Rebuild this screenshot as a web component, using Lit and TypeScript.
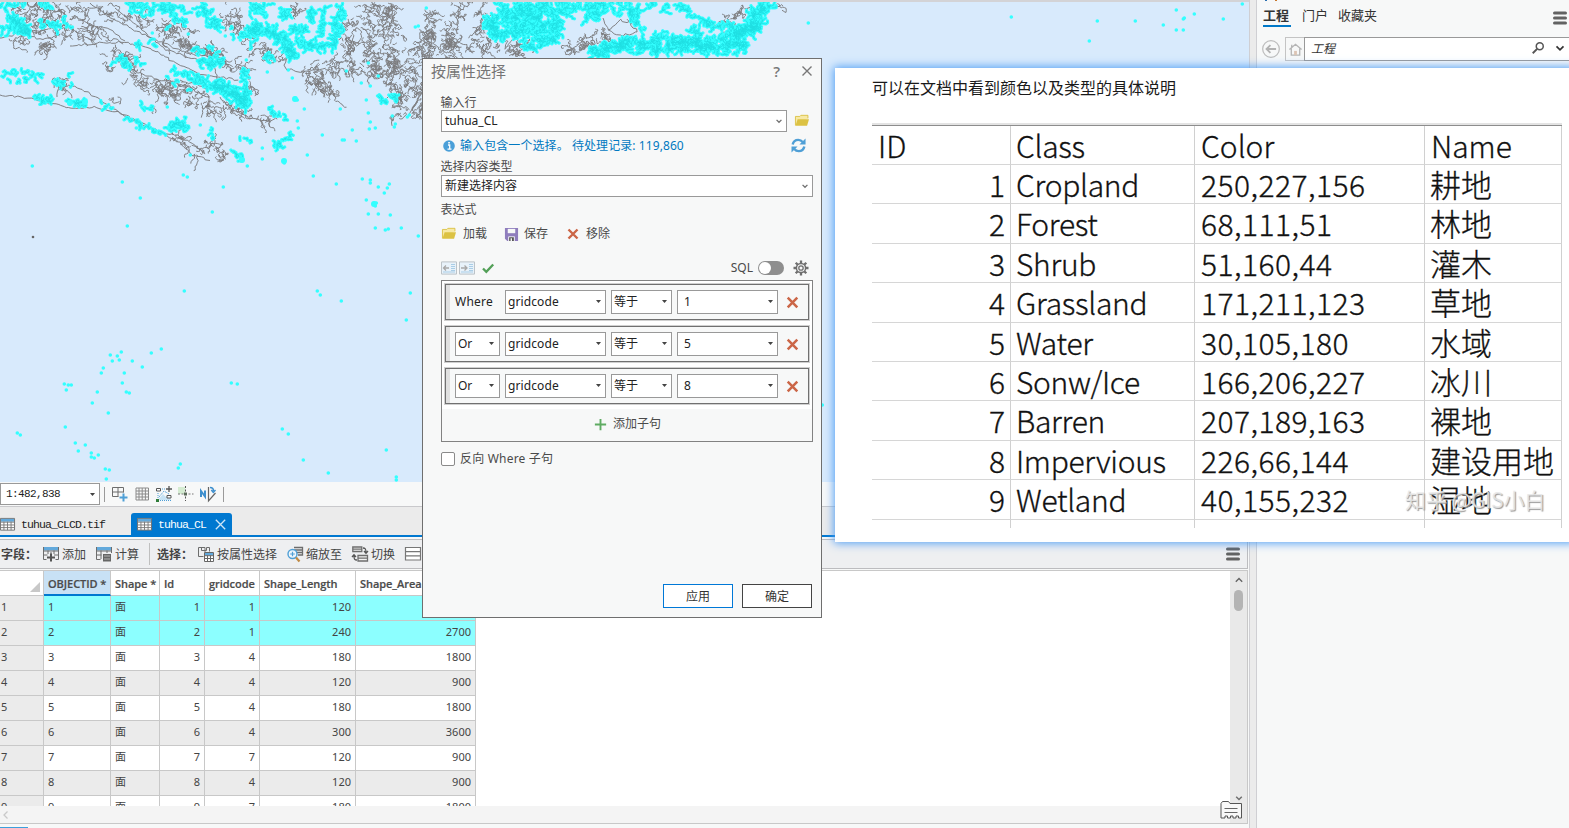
import { LitElement, html, css, svg } from "lit";
import { customElement } from "lit/decorators.js";
import { classMap } from "lit/directives/class-map.js";

type Band = [number, number, number, number, number, number];

function rng(seed: number) {
  let s = seed;
  return () => {
    s = (s * 1664525 + 1013904223) >>> 0;
    return s / 4294967296;
  };
}

// Wandering strokes that follow a band: x1, y1, x2, y2, half width, stroke count.
function scribble(bands: Band[], seed: number, steps: number, size: number, drift: number, share: number): string {
  const r = rng(seed);
  let d = "";
  for (const [x1, y1, x2, y2, w, n] of bands) {
    const len = Math.hypot(x2 - x1, y2 - y1) || 1;
    const ux = (x2 - x1) / len;
    const uy = (y2 - y1) / len;
    for (let i = 0; i < n * share; i++) {
      const t = r() * len;
      const o = (r() + r() - 1) * w;
      let x = x1 + ux * t - uy * o;
      let y = y1 + uy * t + ux * o;
      d += `M${x.toFixed(1)} ${y.toFixed(1)}`;
      let a = r() * 6.28;
      const k = 2 + Math.floor(r() * steps);
      for (let j = 0; j < k; j++) {
        a += (r() - 0.5) * 3.6;
        x += Math.cos(a) * size + ux * drift;
        y += Math.sin(a) * size + uy * drift;
        d += `L${x.toFixed(1)} ${y.toFixed(1)}`;
      }
    }
  }
  return d;
}

// A single jittered line through the given points.
function trace(lines: number[][], seed: number): string {
  const r = rng(seed);
  let d = "";
  for (const p of lines) {
    d += `M${p[0]} ${p[1]}`;
    for (let i = 2; i < p.length; i += 2) {
      const dx = p[i] - p[i - 2];
      const dy = p[i + 1] - p[i - 1];
      const n = Math.max(1, Math.round(Math.hypot(dx, dy) / 3));
      for (let j = 1; j <= n; j++) {
        d += `L${(p[i - 2] + (dx * j) / n + (r() - 0.5) * 2.2).toFixed(1)} ${(p[i - 1] + (dy * j) / n + (r() - 0.5) * 2.2).toFixed(1)}`;
      }
    }
  }
  return d;
}

const GRAY: Band[] = [
  [10, 8, 85, 12, 13, 60], [15, 25, 110, 35, 10, 65], [40, 42, 50, 52, 7, 16], [12, 43, 30, 44, 4, 10],
  [95, 5, 220, 60, 6, 50], [130, 10, 222, 55, 9, 60], [110, 52, 135, 66, 9, 26], [128, 75, 178, 97, 8, 55],
  [165, 78, 205, 98, 7, 22], [185, 100, 216, 113, 5, 20], [215, 60, 248, 72, 5, 18], [222, 105, 275, 123, 4, 26],
  [248, 86, 255, 92, 4, 8], [60, 78, 62, 90, 6, 12], [208, 142, 226, 158, 4, 14], [172, 135, 200, 155, 4, 16],
  [222, 8, 250, 35, 8, 30], [252, 45, 278, 66, 9, 20], [290, 5, 300, 15, 9, 10], [305, 66, 322, 90, 12, 42],
  [318, 68, 345, 68, 8, 20], [330, 88, 334, 95, 4, 8], [350, 12, 350, 75, 8, 42], [368, 5, 375, 75, 13, 80],
  [390, 5, 392, 75, 13, 75], [385, 60, 400, 98, 8, 32], [420, 40, 398, 118, 7, 50], [432, 5, 428, 60, 9, 60],
  [455, 5, 450, 57, 10, 55], [478, 3, 480, 56, 9, 36], [485, 48, 525, 50, 10, 32], [565, 52, 592, 40, 7, 28],
  [598, 30, 608, 38, 7, 12], [718, 24, 748, 12, 5, 16], [777, 3, 778, 14, 1, 3], [421, 65, 421, 125, 3, 25],
  [107, 66, 108, 68, 3, 4], [112, 96, 120, 98, 3, 4], [150, 108, 153, 110, 2, 3], [213, 139, 217, 140, 2, 3],
];

const OUTLINES = [
  [0, 95, 22, 97, 40, 101, 58, 105, 72, 109, 95, 107, 120, 113, 150, 127, 178, 141, 192, 155, 209, 160],
  [57, 97, 60, 86, 75, 86, 100, 100, 125, 116, 160, 133, 178, 135, 205, 152],
  [70, 46, 100, 43, 125, 42, 150, 48, 170, 60, 200, 74, 238, 80],
  [90, 3, 118, 22, 150, 38, 190, 54, 222, 58],
  [115, 8, 140, 28, 165, 50, 200, 60], [78, 20, 110, 30, 124, 40], [70, 28, 95, 42], [0, 38, 20, 33, 42, 40, 60, 35],
  [130, 70, 160, 80, 185, 86, 210, 98], [180, 80, 215, 90], [220, 97, 232, 110, 250, 118, 270, 122],
  [603, 18, 608, 30, 620, 36, 638, 32, 628, 20], [608, 30, 620, 20, 632, 23], [680, 5, 692, 15, 705, 20, 718, 28, 735, 25],
  [408, 115, 418, 100, 412, 110, 422, 92], [286, 60, 284, 68, 300, 72, 325, 68],
];

const CYAN: Band[] = [
  [0, 5, 26, 6, 3, 16], [8, 15, 28, 32, 6, 100], [2, 26, 10, 30, 4, 12], [40, 23, 55, 26, 3, 18], [60, 22, 70, 29, 5, 7],
  [128, 6, 155, 10, 8, 40], [160, 5, 185, 16, 9, 45], [168, 24, 188, 20, 4, 12], [200, 5, 217, 28, 6, 50],
  [40, 4, 50, 5, 2, 10], [132, 42, 157, 45, 3, 10], [188, 48, 218, 53, 4, 15], [116, 60, 142, 64, 4, 26],
  [192, 62, 222, 62, 4, 40], [174, 70, 225, 90, 4, 70], [212, 82, 247, 103, 7, 140], [245, 70, 245, 112, 2, 45],
  [0, 73, 40, 75, 4, 22], [10, 83, 25, 84, 2, 4], [32, 98, 50, 101, 2, 18], [53, 84, 72, 80, 4, 12], [67, 101, 86, 103, 3, 22],
  [93, 100, 120, 112, 3, 5], [128, 118, 162, 133, 1, 16], [168, 130, 186, 120, 4, 22], [174, 122, 188, 129, 3, 12],
  [230, 28, 262, 30, 8, 14], [250, 30, 260, 30, 6, 45], [264, 28, 290, 44, 6, 85], [250, 5, 270, 14, 8, 28],
  [279, 10, 290, 18, 4, 20], [288, 45, 292, 58, 5, 50], [293, 33, 307, 27, 6, 32], [297, 45, 333, 45, 4, 62],
  [311, 4, 312, 20, 2, 18], [325, 5, 322, 36, 2, 28], [341, 5, 333, 48, 4, 46], [268, 55, 272, 59, 3, 10], [240, 30, 252, 45, 6, 8],
  [269, 111, 285, 119, 3, 13], [273, 146, 291, 137, 2, 20], [234, 152, 243, 160, 2, 10], [380, 101, 398, 98, 4, 18],
  [240, 141, 250, 140, 2, 3], [140, 105, 150, 108, 2, 5], [210, 130, 213, 137, 1, 4], [168, 78, 190, 90, 5, 5],
  [490, 16, 496, 38, 7, 90], [498, 12, 560, 12, 12, 230], [503, 30, 560, 26, 12, 200], [525, 48, 560, 36, 7, 75],
  [560, 8, 605, 8, 8, 85], [585, 18, 602, 14, 5, 20], [612, 5, 640, 13, 9, 42], [630, 10, 642, 32, 4, 28],
  [590, 54, 625, 43, 7, 125], [620, 44, 660, 46, 9, 135], [667, 44, 700, 43, 9, 145], [695, 45, 745, 46, 10, 175],
  [692, 28, 702, 50, 6, 38], [735, 35, 762, 22, 7, 100], [725, 37, 755, 26, 6, 75], [750, 20, 770, 5, 6, 75],
  [648, 4, 660, 5, 4, 9], [663, 8, 668, 12, 4, 6], [678, 4, 690, 14, 2, 20], [690, 14, 712, 25, 3, 26], [712, 26, 735, 28, 3, 20], [650, 36, 675, 34, 5, 18],
];

const DOTS: number[][] = [
  [32, 166], [122, 182], [140, 198], [127, 226], [183, 175], [187, 177], [223, 187], [212, 212], [313, 176], [336, 184],
  [362, 179], [370, 180], [370, 183], [378, 187], [389, 184], [387, 188], [384, 193], [366, 200], [374, 203], [375, 206],
  [376, 203], [368, 214], [378, 214], [390, 215], [375, 228], [385, 230], [388, 229], [401, 228], [418, 236], [247, 166],
  [262, 159], [262, 148], [307, 155], [322, 135], [342, 140], [344, 140], [356, 141], [352, 130], [304, 109], [340, 109],
  [297, 100], [295, 98], [368, 113], [370, 122], [375, 128], [394, 127], [395, 124], [369, 129], [366, 100], [392, 116],
  [409, 115], [407, 117], [292, 78], [267, 72], [246, 60], [288, 70], [346, 71], [361, 83], [370, 86], [368, 63], [378, 76],
  [418, 26], [415, 27], [426, 8], [298, 128], [297, 121], [284, 161], [284, 163], [167, 107], [136, 128], [200, 125], [190, 155],
  [184, 291], [317, 291], [320, 295], [341, 301], [410, 293], [406, 320], [161, 349], [151, 353], [121, 352], [110, 355],
  [117, 356], [112, 361], [119, 360], [132, 361], [142, 367], [103, 368], [101, 373], [124, 373], [122, 383], [64, 384],
  [68, 385], [71, 385], [66, 390], [97, 392], [126, 392], [129, 393], [92, 403], [108, 413], [65, 427], [17, 433], [20, 435],
  [75, 443], [85, 445], [78, 451], [91, 453], [91, 457], [94, 458], [98, 455], [105, 469], [109, 470], [106, 479],
  [180, 464], [178, 468], [231, 383], [237, 384], [282, 429], [288, 434], [303, 460], [328, 473], [386, 450], [396, 477], [396, 480],
  [1011, 17], [1089, 41], [1097, 21], [1135, 21], [1163, 25], [1176, 10], [1184, 18], [1183, 19], [1194, 14], [1176, 30],
  [1183, 30], [1223, 19], [1242, 4], [808, 23], [822, 405], [220, 32], [225, 36], [240, 40], [188, 34], [152, 33],
];

const BIG_DOTS = [[374, 204], [295, 99], [284, 161], [85, 102], [242, 160], [70, 103]];

@customElement("gis-map")
class GisMap extends LitElement {
  static styles = css`
    :host { display: block; background: #d8eafc; overflow: hidden; }
    svg { display: block; width: 1249px; height: 480px; }
  `;
  render() {
    const cyan = scribble(CYAN, 77, 3, 1.9, 0.2, 0.7);
    return html`<svg viewBox="0 2 1249 480">
      <g fill="none" stroke="#7b7b7d" stroke-width=".95">
        <path d=${scribble(GRAY, 11, 11, 1.7, 0.3, 1)} />
        <path d=${trace(OUTLINES, 5)} />
      </g>
      <circle cx="33" cy="237" r="1.3" fill="#666" />
      <path d=${cyan} fill="none" stroke="#33ffff" stroke-width="3.2" stroke-linecap="round" stroke-linejoin="round" />
      <path d=${cyan} fill="none" stroke="#1fdfe2" stroke-width="1" opacity=".8" />
      <g fill="#33ffff">
        ${DOTS.map(([x, y]) => svg`<circle cx=${x + 0.3} cy=${y} r="1.8" />`)}
        ${BIG_DOTS.map(([x, y]) => svg`<circle cx=${x} cy=${y} r="3" />`)}
      </g>
    </svg>`;
  }
}

const ICONS: Record<string, unknown> = {
  folder: svg`<path d="M.5 13V2.8h5l1.2-1.3h8.1V5" fill="#f7e9a5" stroke="#d9bf3f"/><path d="M.5 13.5 3 6h13l-2.2 7.5z" fill="#dcc243"/>`,
  save: svg`<path d="M1 1h14v14H3.5L1 12.6z" fill="#8f7dbd"/><path d="M4 2h8v4.6H4z" fill="#f7f8f8"/><path d="M4.5 10h7v5h-7z" fill="#f7f8f8"/><path d="M5.5 10.8h5V15h-2v-3h-1.5v3h-1.5z" fill="#555"/>`,
  cross: svg`<path d="M3.5 3.5l9 9M12.5 3.5l-9 9" stroke="#cb6647" stroke-width="2.4"/>`,
  plus: svg`<path d="M8 2v12M2 8h12" stroke="#5fab62" stroke-width="2"/>`,
  check: svg`<path d="M3 8.500l3.300 3.300L13.200 4.500" fill="none" stroke="#53a058" stroke-width="2.300"/>`,
  info: svg`<circle cx="8" cy="8" r="5.8" fill="#4a9fd8"/><path d="M7 7h1.700v4.200M6.500 11.200h4" stroke="#fff" stroke-width="1.3" fill="none"/><path d="M7.200 4h1.700v1.600H7.200z" fill="#fff"/>`,
  refresh: svg`<path d="M1.800 7C2.500 3.500 5 2 7.800 2c2 0 3.500.8 4.600 2.200" fill="none" stroke="#4f9fd6" stroke-width="2.600"/><path d="M15.500.5v6.500H9z" fill="#4f9fd6"/><path d="M14.200 9c-.7 3.500-3.200 5-6 5-2 0-3.500-.8-4.600-2.200" fill="none" stroke="#4f9fd6" stroke-width="2.600"/><path d="M.5 15.500V9H7z" fill="#4f9fd6"/>`,
  outdent: svg`<path d="M.5 1.900h15v12.200H.5z" fill="#e8f2fa" stroke="#bcc3c8"/><path d="M10 4.500h4M10 6.500h4M10 8.500h4M10 10.500h4M2 12h12" stroke="#a9cde6"/><path d="M8 8H2.500M5 5.500 2.500 8 5 10.500" stroke="#a8a8a8" stroke-width="1.300" fill="none"/>`,
  indent: svg`<path d="M.5 1.900h15v12.200H.5z" fill="#e8f2fa" stroke="#bcc3c8"/><path d="M10 4.500h4M10 6.500h4M10 8.500h4M10 10.500h4M2 12h12" stroke="#a9cde6"/><path d="M2 8h6M5.500 5.500 8 8l-2.500 2.500" stroke="#a8a8a8" stroke-width="1.300" fill="none"/>`,
  gear: svg`<g fill="none" stroke="#6f6f6f"><path d="M8 .5v3M8 12.500v3M.5 8h3M12.500 8h3M2.700 2.700l2.100 2.100M11.200 11.200l2.100 2.100M13.300 2.700l-2.100 2.100M4.800 11.200l-2.100 2.100" stroke-width="2.300"/><circle cx="8" cy="8" r="4.600" stroke-width="1.500" fill="#f7f8f8"/><circle cx="8" cy="8" r="2.200" stroke-width="1.300"/></g>`,
  close: svg`<path d="M3.500 3.500l9 9M12.500 3.500l-9 9" stroke="#777" stroke-width="1.400"/>`,
  closeLight: svg`<path d="M3 3l10 10M13 3L3 13" stroke="#cfe6f7" stroke-width="1.400"/>`,
  menu: svg`<path d="M2.500 2.900h11M2.500 8h11M2.500 13.100h11" stroke="#626262" stroke-width="3" stroke-linecap="round"/>`,
  table: svg`<path d="M.5 1.500h15v12.500H.5z" fill="#fff" stroke="#6d6d6d"/><path d="M1 2h14v3H1z" fill="#62a9dc"/><path d="M.5 5.500h15M.5 8.500h15M.5 11.300h15M4.200 5v9M8 5v9M11.800 5v9" stroke="#7a7a7a"/>`,
  addField: svg`<path d="M1 1h14v3.400H1z" fill="#62a9dc"/><path d="M.5 1v12.500h3M15.500 1v12.500h-3M.5 5h15M.5 9h4M11 9h4.500M5 4.500V8M11 4.500V8M8 6v8" stroke="#6d6d6d" fill="none"/><path d="M8 7.500v8M4 11.500h8" stroke="#555" stroke-width="2"/>`,
  calc: svg`<path d="M1 1h14v3.400H1z" fill="#62a9dc"/><path d="M.5 1v12.500h4M15.500 1v6M.5 5h15M.5 9h5M5 4.500V13M11 4.500V7" stroke="#6d6d6d" fill="none"/><path d="M7 8h8v7.500H7z" fill="#666"/><path d="M8.500 10h5M8.500 13h5" stroke="#fff" stroke-width="1.200" stroke-dasharray="1 1"/>`,
  selAttr: svg`<path d="M7 1.500H.5v9h5M7 1.500v5M3.500 1.500v3h5v-3h3v4" fill="none" stroke="#6d6d6d"/><path d="M6.500 6.500h9v9h-9z" fill="#fff" stroke="#666"/><path d="M7 7h8v2.200H7z" fill="#62a9dc"/><path d="M6.500 9.700h9M6.500 12.500h9M9.500 9.500v6M12.500 9.500v6" stroke="#666"/>`,
  zoomTo: svg`<path d="M7 1.500h8.500v2.500H7M9 6.500h6.500V4M11 9h4.500V6.500" fill="none" stroke="#6d6d6d" stroke-width="1.300"/><circle cx="5.500" cy="8" r="4.500" fill="#eef6fc" stroke="#4f9fd6" stroke-width="1.400"/><path d="M5.500 5.700v4.600M3.200 8h4.600" stroke="#4f9fd6" stroke-width="1.200"/><path d="M9 11.500l3.500 4" stroke="#c08a45" stroke-width="2.200"/>`,
  swap: svg`<path d="M.8 1h9v4.500h-9zM.8 3.200h9M6 9.500h9.500V15H6zM6 12.200h9.500" fill="#f3f3f3" stroke="#6d6d6d" stroke-width="1.300"/><path d="M11 2c2.500 0 3 1 3 4.500M12 5l2 2.300L16 5M5 14c-2.500 0-3-1-3-4.500M0 11l2-2.300L4 11" fill="none" stroke="#555" stroke-width="1.300"/>`,
  rows: svg`<path d="M.5 1.500h15v12.500H.5zM.5 5.600h15M.5 9.800h15" fill="#fff" stroke="#777" stroke-width="1.200"/>`,
  gridPlus: svg`<path d="M.5 1.500h11v5M.5 1.500v9h6M6 1.500v9M.5 6h11" fill="none" stroke="#6d6d6d"/><path d="M11.500 7.500v8M7.500 11.500h8" stroke="#4f9fd6" stroke-width="2"/>`,
  grid: svg`<path d="M2 2h12.500v12H2zM5 2v12M8.200 2v12M11.400 2v12M2 5h12.500M2 8h12.500M2 11h12.500" fill="none" stroke="#8b8b8b"/>`,
  edit: svg`<path d="M2 14l5-6 3 3 2-2 3 5z" fill="#c6e2f4"/><path d="M3 11 8 5l5 3" fill="none" stroke="#62a9dc" stroke-dasharray="2 1"/><path d="M.5 2.500h4v2.500h-4zM11 9.500h4v2.500h-4z" fill="#fff" stroke="#555"/><path d="M13 0v6M10 3h6" stroke="#555" stroke-width="1.300"/><path d="M6 3h3M2 7v6M4 14.500h11" stroke="#4f9fd6" stroke-dasharray="1 1"/><path d="M0 13h3v3H0z" fill="#2f7d3a"/>`,
  snap: svg`<path d="M0 1h7v7H0z" fill="#d5ecd2"/><path d="M7.500 0v15" stroke="#555" stroke-dasharray="2 1.500"/><path d="M0 8h15.500" stroke="#777" stroke-dasharray="2 1.500"/><path d="M6 6.500h3v3H6z" fill="#5b6b5b"/>`,
  north: svg`<path d="M1 11V5l4 5.500V4.500" fill="none" stroke="#3d8fce" stroke-width="2"/><path d="M8.500 1v14l7-8" fill="none" stroke="#666" stroke-width="1.200"/><path d="M10 1.500c2.500 0 3.500 1 3.500 3.500M11.300 4l2 2.500L15.500 4" fill="none" stroke="#3d8fce" stroke-width="1.400"/>`,
  back: svg`<circle cx="8" cy="8" r="7.400" fill="none" stroke="#bdbdbd" stroke-width="1.100"/><path d="M12.500 8H4M7.500 4.500 4 8l3.500 3.500" fill="none" stroke="#b2b2b2" stroke-width="1.600"/>`,
  home: svg`<path d="M1.500 8 8 2.500 14.500 8M3.500 7v7h9V7M4 3v3" fill="none" stroke="#b5b5b5" stroke-width="1.400"/><path d="M6.500 9.500h3V14h-3z" fill="#dcc5b5"/>`,
  search: svg`<circle cx="10" cy="6" r="4" fill="none" stroke="#555" stroke-width="1.700"/><path d="M7 9l-5 5" stroke="#555" stroke-width="2.200"/>`,
  chev: svg`<path d="M5.200 6.700 8 9.500l2.800-2.800" fill="none" stroke="#707070" stroke-width="1.500"/>`,
  chevDark: svg`<path d="M4.500 6.300 8 9.800l3.500-3.500" fill="none" stroke="#333" stroke-width="1.700"/>`,
  chevUp: svg`<path d="M4.800 9.700 8 6.500l3.200 3.200" fill="none" stroke="#666" stroke-width="1.400"/>`,
  chevLeft: svg`<path d="M9.500 4.500 6 8l3.500 3.500" fill="none" stroke="#c9c9c9" stroke-width="1.300"/>`,
  caret: svg`<path d="M5.300 6.300h5.400L8 9.700z" fill="#444"/>`,
  notes: svg`<path d="M1 17V2.500L2.500.500h6L10 2.500h11.500V17H18.500v-2h-2.500v2h-3v-2h-2.500v2h-3v-2H5v2z" fill="#f8f8f8" stroke="#555"/><path d="M4.500 7.500h13M4.500 11.500h13" stroke="#666"/>`,
};

const icon = (name: string, w = 16, h = w, box = "0 0 16 16") =>
  html`<svg class="ic" width=${w} height=${h} viewBox=${box}>${ICONS[name]}</svg>`;

const shared = css`
  * { box-sizing: border-box; }
  .ic { display: block; flex: none; overflow: visible; }
`;

@customElement("attribute-table")
class AttributeTable extends LitElement {
  static styles = [
    shared,
    css`
      :host { display: flex; flex: 1; min-height: 0; font: 11px "Noto Sans", "Noto Sans CJK SC", sans-serif; color: #444; }
      .body { flex: 1; min-width: 0; overflow: hidden; background: #fff; }
      .row { display: grid; grid-template-columns: 44px 67px 49px 45px 55px 96px 120px; width: 476px; height: 25px; }
      .row > div { border-right: 1px solid #c8c8c8; border-bottom: 1px solid #c8c8c8; line-height: 22px; padding: 0 4px; white-space: nowrap; overflow: hidden; }
      .row > .no { background: #ebebeb; padding-left: 1px; }
      .head > div { font-family: "Open Sans", sans-serif; font-weight: 600; line-height: 25px; letter-spacing: -.05px; color: #4b4b4b; -webkit-text-stroke: .2px #4b4b4b; }
      .head > .key { background: #c8e1f5; border-bottom: 2px solid #0078d0; }
      .head > .corner { padding: 0; display: flex; align-items: flex-end; justify-content: flex-end; }
      .corner i { width: 0; height: 0; border-left: 10px solid transparent; border-bottom: 10px solid #c8c8c8; margin: 0 3px 3px 0; }
      .num { text-align: right; }
      .alt > div { background: #ebebeb; }
      .sel > div { background: #8cffff; }
    `,
  ];
  render() {
    const rows = [
      [1, 1, 120, 900], [2, 1, 240, 2700], [3, 4, 180, 1800], [4, 4, 120, 900], [5, 4, 180, 1800],
      [6, 4, 300, 3600], [7, 7, 120, 900], [8, 4, 120, 900], [9, 7, 180, 1800],
    ];
    return html`<div class="body">
      <div class="row head">
        <div class="corner"><i></i></div><div class="key">OBJECTID *</div><div>Shape *</div><div>Id</div>
        <div>gridcode</div><div>Shape_Length</div><div>Shape_Area</div>
      </div>
      ${rows.map(
        ([id, code, len, area]) => html`<div class=${classMap({ row: true, sel: id < 3, alt: id > 2 && id % 2 === 0 })}>
          <div class="no">${id}</div><div>${id}</div><div>面</div><div class="num">${id}</div>
          <div class="num">${code}</div><div class="num">${len}</div><div class="num">${area}</div>
        </div>`,
      )}
    </div>`;
  }
}

@customElement("select-dialog")
class SelectDialog extends LitElement {
  static styles = [
    shared,
    css`
      :host { display: flex; flex-direction: column; background: #f7f8f8; border: 1px solid #6f6f6f; padding: 0 8px 9px 18px;
        font: 12px/16px "Noto Sans", "Noto Sans CJK SC", sans-serif; color: #4a4a4a; }
      .title { display: flex; align-items: center; height: 24px; margin: 0 0 12px -10px; font-size: 15px; color: #757575; flex: none; }
      .title b { margin-left: auto; margin-right: 19px; font: 600 15px "Open Sans"; color: #777; }
      .title .ic { margin-right: -2px; }
      .combo { display: flex; align-items: center; height: 22px; border: 1px solid #999; background: #fff; padding: 0 0 1px 3px; color: #222; }
      .combo .ic { margin-left: auto; }
      .label { height: 16px; flex: none; margin-left: -.5px; }
      .first { height: 15px; }
      .expr { margin-top: 5px; }
      .line { display: flex; align-items: center; flex: none; }
      .in { width: 346px; margin-right: 7px; }
      .info { height: 27px; color: #0079c1; width: 365px; }
      .info span { margin-left: 3px; margin-right: 9px; letter-spacing: .08px; }
      .info .ic:last-child { margin-left: auto; }
      .wide { width: 372px; }
      .acts { height: 32px; }
      .acts span { margin: 0 17px 0 5px; }
      .acts .ic:first-child { margin-right: 1px; }
      .tools { height: 24px; gap: 2px; width: 368px; margin-top: 6px; }
      .tools .ic:nth-of-type(3) { margin-left: 1px; }
      .tools .sql { margin-left: auto; }
      .toggle { width: 26px; height: 14px; border-radius: 7px; background: #8e8e8e; margin: 0 7px 0 3px; padding: 1px; }
      .toggle i { display: block; width: 12px; height: 12px; border-radius: 50%; background: #fff; }
      .frame { width: 372px; height: 162px; border: 1px solid #828282; background: #fff; padding: 2px; display: flex; flex-direction: column; gap: 4px; flex: none; }
      .clause { display: flex; align-items: center; gap: 5px; height: 38px; flex: none; border: 1px solid #d0d0d0; outline: 1px solid #707070; outline-offset: -2px;
        background: #f7f8f8; padding-left: 10px; box-shadow: inset 5px 0 #e0e0e0; }
      .clause .combo { height: 24px; padding: 0 0 1px 2px; }
      .clause .combo .ic { margin-right: -1px; }
      .clause .op .ic { margin-right: 0; }
      .op { width: 45px; }
      .word { width: 45px; color: #222; letter-spacing: .25px; }
      .field { width: 101px; letter-spacing: .1px; }
      .eq { width: 61px; }
      .val { width: 101px; }
      .clause .val { padding-left: 6px; }
      .clause > .ic { margin-left: 1px; }
      .add { display: flex; align-items: center; justify-content: center; gap: 5px; margin: 0 -2px -2px; flex: 1; background: #f7f8f8; padding-bottom: 2px; }
      .inv { height: 34px; gap: 5px; letter-spacing: .2px; }
      .box { width: 14px; height: 14px; border: 1px solid #8a8a8a; border-radius: 2px; background: #fff; }
      .foot { display: flex; justify-content: flex-end; gap: 9px; margin-top: auto; padding-right: 1px; }
      .btn { width: 70px; height: 24px; border: 1px solid #444; background: #fff; text-align: center; line-height: 23px; color: #333; }
      .go { border-color: #0078d7; }
    `,
  ];
  combo(cls: string, text: string) {
    return html`<div class="combo ${cls}">${text}${icon("caret", 15)}</div>`;
  }
  clause(op: string, val: string) {
    return html`<div class="clause">
      ${op === "Where" ? html`<span class="word">Where</span>` : this.combo("op", op)}
      ${this.combo("field", "gridcode")}${this.combo("eq", "等于")}${this.combo("val", val)}${icon("cross", 17)}
    </div>`;
  }
  render() {
    return html`
      <div class="title">按属性选择<b>?</b>${icon("close", 16)}</div>
      <div class="label first">输入行</div>
      <div class="line"><div class="combo in">tuhua_CL${icon("chev", 14)}</div>${icon("folder", 16, 14)}</div>
      <div class="line info">${icon("info", 16)}<span>输入包含一个选择。 待处理记录: 119,860</span>${icon("refresh", 15)}</div>
      <div class="label">选择内容类型</div>
      <div class="combo wide">新建选择内容${icon("chev", 14)}</div>
      <div class="label expr">表达式</div>
      <div class="line acts">
        ${icon("folder", 16, 14)}<span>加载</span>${icon("save", 15)}<span>保存</span>${icon("cross", 16)}<span>移除</span>
      </div>
      <div class="line tools">
        ${icon("outdent")}${icon("indent")}<i></i>${icon("check")}<span class="sql">SQL</span><div class="toggle"><i></i></div>${icon("gear")}
      </div>
      <div class="frame">
        ${this.clause("Where", "1")}${this.clause("Or", "5")}${this.clause("Or", "8")}
        <div class="add">${icon("plus", 15)}添加子句</div>
      </div>
      <div class="line inv"><div class="box"></div>反向 Where 子句</div>
      <div class="foot"><div class="btn go">应用</div><div class="btn">确定</div></div>
    `;
  }
}

@customElement("class-sheet")
class ClassSheet extends LitElement {
  static styles = [
    shared,
    css`
      :host { display: block; background: #fff; padding: 8px 7px 0 37px; box-shadow: 0 0 9px 1px #4d9df5; font-family: "Noto Sans CJK SC", sans-serif; color: #1a1a1a; }
      p { margin: 0; font-size: 16px; line-height: 22px; }
      .sheet { margin-top: 25px; height: 405px; overflow: hidden; border-top: 2px solid #e3e3e3; position: relative; width: 690px; }
      .row { display: grid; grid-template-columns: 139px 184px 230px 137px; height: 39.4px; font-size: 30px; line-height: 38px; font-weight: 300; color: #111; -webkit-text-stroke: .3px #111; }
      .row:first-child { border-top: 1px solid #8d8d8d; height: 40px; }
      .row > div { border-right: 1px solid #d0d0d0; border-bottom: 1px solid #d6d6d6; padding-left: 6px; white-space: nowrap; }
      .row > .id { text-align: right; padding-right: 5px; }
      .row:first-child > .id { text-align: left; }
      .row > .cls { letter-spacing: -.3px; padding-left: 5px; }
      .row > .rgb { letter-spacing: .45px; }
      .row > .zh { font-size: 31px; padding-left: 5px; }
      .mark { position: absolute; right: 17px; bottom: 16px; font-size: 21px; line-height: 26px; letter-spacing: -.2px; color: rgba(232, 232, 232, .85); text-shadow: 1px 1px 1px #999; white-space: nowrap; }
    `,
  ];
  render() {
    const rows = [
      ["ID", "Class", "Color", "Name"], ["1", "Cropland", "250,227,156", "耕地"], ["2", "Forest", "68,111,51", "林地"],
      ["3", "Shrub", "51,160,44", "灌木"], ["4", "Grassland", "171,211,123", "草地"], ["5", "Water", "30,105,180", "水域"],
      ["6", "Sonw/Ice", "166,206,227", "冰川"], ["7", "Barren", "207,189,163", "裸地"], ["8", "Impervious", "226,66,144", "建设用地"],
      ["9", "Wetland", "40,155,232", "湿地"], ["", "", "", ""],
    ];
    return html`<p>可以在文档中看到颜色以及类型的具体说明</p>
      <div class="sheet">
        ${rows.map(
          ([id, c, col, n], i) => html`<div class="row">
            <div class="id">${id}</div><div class="cls">${c}</div>
            <div class=${i ? "rgb" : ""}>${col}</div><div class=${i ? "zh" : ""}>${n}</div>
          </div>`,
        )}
        <div class="mark">知乎 @GIS小白</div>
      </div>`;
  }
}

@customElement("app-root")
class AppRoot extends LitElement {
  static styles = [
    shared,
    css`
      :host { display: flex; position: relative; width: 1569px; height: 828px; overflow: hidden; background: #f7f8f8;
        font: 12px "Noto Sans", "Noto Sans CJK SC", sans-serif; color: #333; }
      .main { width: 1249px; display: flex; flex-direction: column; border-top: 2px solid #d3d3d6; }
      gis-map { height: 480px; flex: none; }
      .maptools { height: 25px; border-bottom: 1px solid #c9c9cc; display: flex; align-items: center; background: #f7f8f8; }
      .scale { width: 100px; height: 22px; border: 1px solid #999; background: #fff; display: flex; align-items: center; justify-content: space-between; padding-left: 5px; }
      .mono { font-family: "Liberation Mono", monospace; font-size: 11px; letter-spacing: -.6px; color: #222; }
      .sep { width: 1px; height: 15px; background: #9a9a9a; margin: 0 7px 0 4px; }
      .sep.end { margin-left: 1px; }
      .maptools .ic { margin-right: 6px; }
      .scale .ic { margin-right: -1px; }
      .tabs { height: 30px; background: #ebebeb; border-bottom: 2px solid #0078d0; display: flex; align-items: flex-end; flex: none; }
      .tab { height: 22px; display: flex; align-items: center; gap: 6px; width: 131px; }
      .tab .mono { font-size: 11.5px; letter-spacing: -.9px; padding-top: 1px; }
      .on { width: 101px; background: #0078d0; border-radius: 3px 3px 0 0; padding-left: 6px; }
      .on .mono { color: #fff; margin-right: 1px; }
      .bar { height: 30px; margin-top: 2px; border: 1px solid #bcbcbf; border-left: 0; width: 1248px; background: #eeeff1; display: flex; align-items: center; flex: none; color: #444; padding-left: 1px; }
      .bar b { font-weight: 600; color: #444; width: 42px; white-space: nowrap; }
      .bar .div + b { width: 41px; }
      .bar span { margin: 0 10px 0 3px; }
      .bar .div { width: 1px; height: 22px; background: #bfbfbf; margin: 0 7px 0 0; }
      .bar .menu { margin-left: auto; margin-right: 6px; padding-bottom: 1px; }
      .grid { flex: 1; min-height: 0; display: flex; margin-top: 1px; border: 1px solid #c8c8c8; border-left: 0; width: 1248px; margin-bottom: 4px; background: #f4f4f4; }
      .left { flex: 1; display: flex; flex-direction: column; min-width: 0; }
      .hs { height: 17px; background: #f4f4f4; display: flex; align-items: center; padding-left: 0; }
      .hs .ic { margin-left: -2px; }
      .vs { width: 17px; background: #e9e9e9; display: flex; flex-direction: column; align-items: center; padding: 1px 0 17px; }
      .thumb { width: 9px; height: 21px; border-radius: 5px; background: #b4b4b4; margin: 2px 0 auto; }
      .split { width: 8px; background: #ebebeb; border: 1px solid #cfcfd3; border-width: 0 1px; }
      .catalog { flex: 1; background: #f7f8f8; }
      .cats { display: flex; align-items: center; gap: 11px; height: 32px; padding: 0 1px 0 6px; font-size: 13px; color: #333; }
      .cats div { height: 20px; line-height: 16px; margin-top: 1px; }
      .cats .cur { border-bottom: 2px solid #0078c8; font-weight: 600; width: 28px; }
      .cats .cur + div { margin-right: -1px; }
      .cats .ic { margin-left: auto; margin-top: 4px; }
      .find { display: flex; align-items: center; margin-top: 5px; padding-left: 5px; }
      .home { width: 19px; height: 24px; border: 1px solid #c4c4c4; border-right: 0; margin-left: 5px; display: grid; place-items: center; }
      .q { flex: 1; height: 24px; border: 1px solid #999; border-right: 0; background: #fff; display: flex; align-items: center; padding: 0 1px 2px 6px; font-style: italic; gap: 7px; }
      .q .ic:first-of-type { margin-left: auto; }
      select-dialog { position: absolute; left: 422px; top: 58px; width: 400px; height: 560px; }
      class-sheet { position: absolute; left: 835px; top: 68px; width: 740px; height: 474px; }
      .notes { position: absolute; left: 1220px; top: 801px; }
      .status { position: absolute; left: 0; top: 827px; width: 28px; height: 1px; background: #3ba0dc; }
      .stub { position: absolute; left: 1265px; top: 0; width: 12px; height: 1px; background: linear-gradient(90deg, #2a6fb0 2px, transparent 2px 10px, #c7762b 10px); }
    `,
  ];
  render() {
    return html`
      <div class="main">
        <gis-map></gis-map>
        <div class="maptools">
          <div class="scale"><span class="mono">1:482,838</span>${icon("caret", 15)}</div>
          <div class="sep"></div>
          ${icon("gridPlus")}${icon("grid")}${icon("edit")}${icon("snap")}${icon("north")}
          <div class="sep end"></div>
        </div>
        <div class="tabs">
          <div class="tab">${icon("table", 15)}<span class="mono">tuhua_CLCD.tif</span></div>
          <div class="tab on">${icon("table", 15)}<span class="mono">tuhua_CL</span>${icon("closeLight", 15)}</div>
        </div>
        <div class="bar">
          <b>字段：</b>${icon("addField", 16)}<span>添加</span>${icon("calc", 16)}<span>计算</span>
          <div class="div"></div><b>选择：</b>${icon("selAttr", 16)}<span>按属性选择</span>${icon("zoomTo", 16)}<span>缩放至</span>${icon("swap", 16)}<span>切换</span>${icon("rows", 16)}
          <div class="menu">${icon("menu", 16)}</div>
        </div>
        <div class="grid">
          <div class="left">
            <attribute-table></attribute-table>
            <div class="hs">${icon("chevLeft")}</div>
          </div>
          <div class="vs">${icon("chevUp")}<div class="thumb"></div>${icon("chev")}</div>
        </div>
      </div>
      <div class="split"></div>
      <div class="catalog">
        <div class="cats"><div class="cur">工程</div><div>门户</div><div>收藏夹</div>${icon("menu", 16)}</div>
        <div class="find">${icon("back", 18)}<div class="home">${icon("home", 15)}</div><div class="q">工程${icon("search", 14)}${icon("chevDark")}</div></div>
      </div>
      <div class="stub"></div>
      <div class="notes">${icon("notes", 22, 18, "0 0 22 18")}</div>
      <div class="status"></div>
      <select-dialog></select-dialog>
      <class-sheet></class-sheet>
    `;
  }
}
